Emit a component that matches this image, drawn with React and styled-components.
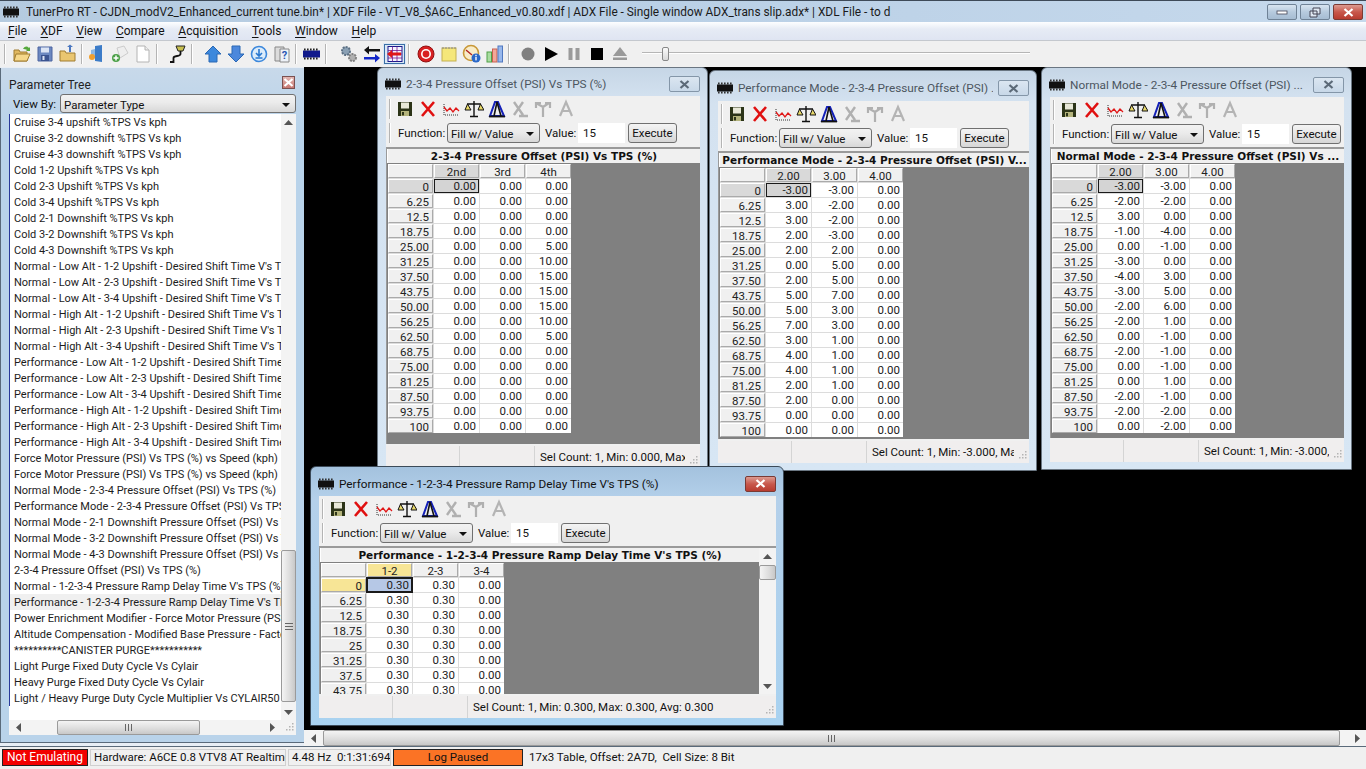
import React from 'react';
import styled, { createGlobalStyle } from 'styled-components';

const UI_FONT = 'Roboto, "Noto Sans", "Liberation Sans", sans-serif';

const GlobalStyle = createGlobalStyle`
  html, body {
    margin: 0;
    padding: 0;
    background: #000;
    overflow: hidden;
  }
  * {
    box-sizing: border-box;
  }
`;

const AppFrame = styled.div`
  width: 1366px;
  height: 769px;
  display: flex;
  flex-direction: column;
  font-family: ${UI_FONT};
  font-size: 11.5px;
  color: #111;
  overflow: hidden;
`;

const TitleBar = styled.div`
  height: 22px;
  flex: none;
  display: flex;
  align-items: center;
  padding: 1px 3px 0 2px;
  border-top: 1px solid #3e4a58;
  background: linear-gradient(90deg, #b5cbe0, #bad0e6 50%, #c6d9ec);
`;

const AppTitle = styled.div`
  flex: 1;
  margin-left: 6px;
  font-size: 11.85px;
  color: #1a1a1a;
  white-space: nowrap;
  overflow: hidden;
`;

const CaptionButton = styled.div`
  width: 30px;
  height: 16px;
  margin-left: 3px;
  display: flex;
  align-items: center;
  justify-content: center;
  border: 1px solid ${(p) => (p.$danger ? '#7a3a34' : '#6f8296')};
  border-radius: 2px;
  background: ${(p) =>
    p.$danger
      ? 'linear-gradient(#dc9a90, #c8584c 50%, #b83c30)'
      : 'linear-gradient(#d8e4f0, #b6cade 50%, #a6bcd2)'};
`;

const MenuBar = styled.div`
  height: 19px;
  flex: none;
  display: flex;
  align-items: center;
  padding-left: 8px;
  gap: 13.7px;
  background: linear-gradient(#fdfeff, #e6ebf5 40%, #dfe5f2);
  border-bottom: 1px solid #c4c8ce;
  font-size: 12px;
`;

const MenuItem = styled.span`
  color: #111;
  u {
    text-decoration-thickness: 1px;
    text-underline-offset: 2px;
  }
`;

const MainToolbar = styled.div`
  height: 26px;
  flex: none;
  display: flex;
  align-items: center;
  padding-left: 2px;
  background: #f0f0f0;
`;

const ToolSep = styled.div`
  width: 2px;
  height: 20px;
  flex: none;
  margin-left: 2px;
  margin-right: ${(p) => p.$after ?? 4}px;
  background: #b4b4b4;
  border-right: 1px solid #fff;
`;

const ToolIcon = styled.div`
  width: 23px;
  height: 22px;
  flex: none;
  display: flex;
  align-items: center;
  justify-content: center;
  ${(p) => p.$pressed && 'background: #dce8f5; outline: 1px solid #3a6ea5; outline-offset: -2px;'}
`;

const SliderTrack = styled.div`
  width: 388px;
  height: 14px;
  margin-left: 11px;
  display: flex;
  align-items: center;
  padding-left: 20px;
  background: linear-gradient(#f0f0f0 5px, #b6b6b6 5px, #b6b6b6 6px, #fff 6px, #fff 7px, #f0f0f0 7px);
`;

const SliderThumb = styled.div`
  width: 7px;
  height: 14px;
  border: 1px solid #888;
  border-radius: 2px;
  background: linear-gradient(#fafafa, #d8d8d8);
`;

const Workspace = styled.div`
  flex: 1;
  min-height: 0;
  display: flex;
  background: #e8eef5;
`;

const TreePanel = styled.div`
  width: 304px;
  flex: none;
  display: flex;
  flex-direction: column;
  margin: 1px 0 3px;
  padding: 0 8px 7px 8px;
  background: linear-gradient(#c8d9ea, #b9d3ea 60px);
  border-left: 1px solid #5a6a7a;
  border-bottom: 1px solid #5a6a7a;
`;

const TreeHeader = styled.div`
  height: 26px;
  flex: none;
  display: flex;
  align-items: flex-end;
  justify-content: space-between;
  padding: 0 0 2px 0;
  font-size: 12px;
  color: #222;
`;

const TreeClose = styled.div`
  width: 13px;
  height: 13px;
  margin: 0 1px 3px 0;
  display: flex;
  align-items: center;
  justify-content: center;
  border: 1px solid #7a5050;
  background: linear-gradient(#e2b6b2, #c87872);
`;

const ViewByRow = styled.div`
  height: 19px;
  flex: none;
  display: flex;
  align-items: center;
  gap: 5px;
  padding-left: 4px;
  font-size: 11.5px;
`;

const ViewByLabel = styled.span`
  width: 42px;
  flex: none;
  white-space: nowrap;
`;

const Combo = styled.div`
  height: ${(p) => p.$h ?? 20}px;
  width: ${(p) => (p.$w ? `${p.$w}px` : 'auto')};
  flex: ${(p) => (p.$w ? 'none' : '1')};
  display: flex;
  align-items: center;
  justify-content: space-between;
  padding: 2px 5px 0 3px;
  border: 1px solid #707070;
  border-radius: 3px;
  background: linear-gradient(#f2f2f2, #ebebeb 45%, #d8d8d8);
  font-size: 11.5px;
  white-space: nowrap;
`;

const ComboArrow = styled.span`
  width: 0;
  height: 0;
  border-left: 4px solid transparent;
  border-right: 4px solid transparent;
  border-top: 4px solid #111;
`;

const ListBody = styled.div`
  flex: 1;
  min-height: 0;
  display: flex;
  margin-top: 1px;
  background: #fff;
`;

const ListRows = styled.div`
  flex: 1;
  min-width: 0;
  overflow: hidden;
`;

const ListRow = styled.div`
  height: 16px;
  line-height: 18px;
  padding-left: 4px;
  font-size: 11px;
  white-space: nowrap;
  overflow: hidden;
  border-left: 1px solid #2a3a9a;
  color: #1c1c1c;
  background: ${(p) => (p.$selected ? '#f0f0f0' : '#fff')};
`;

const VScroll = styled.div`
  width: ${(p) => p.$w ?? 15}px;
  flex: none;
  display: flex;
  flex-direction: column;
  align-items: center;
  background: #f3f3f3;
`;

const ScrollEnd = styled.div`
  height: 16px;
  flex: none;
  display: flex;
  align-items: center;
  justify-content: center;
`;

const VTrack = styled.div`
  flex: 1;
  width: 100%;
  display: flex;
  flex-direction: column;
  padding-top: ${(p) => p.$top}px;
`;

const VThumb = styled.div`
  height: ${(p) => p.$h}px;
  flex: none;
  display: flex;
  align-items: center;
  justify-content: center;
  border: 1px solid #9a9a9a;
  border-radius: 2px;
  background: linear-gradient(90deg, #f4f4f4, #dcdcdc 60%, #c8c8c8);
`;

const GripBars = styled.span`
  width: 8px;
  height: 7px;
  border-top: 1px solid #666;
  border-bottom: 1px solid #666;
  background: linear-gradient(#666, #666) center / 100% 1px no-repeat;
`;

const HScroll = styled.div`
  height: ${(p) => p.$h ?? 15}px;
  flex: none;
  display: flex;
  align-items: center;
  background: #f3f3f3;
`;

const HEnd = styled.div`
  width: 18px;
  height: 100%;
  flex: none;
  display: flex;
  align-items: center;
  justify-content: center;
`;

const HTrack = styled.div`
  flex: 1;
  height: 100%;
  display: flex;
  padding-left: ${(p) => p.$left}px;
`;

const HThumb = styled.div`
  width: ${(p) => p.$w}px;
  height: 100%;
  display: flex;
  align-items: center;
  justify-content: center;
  border: 1px solid #9a9a9a;
  border-radius: 2px;
  background: linear-gradient(#f4f4f4, #dcdcdc 60%, #c8c8c8);
`;

const GripBarsH = styled.span`
  width: 7px;
  height: 7px;
  border-left: 1px solid #666;
  border-right: 1px solid #666;
  background: linear-gradient(#666, #666) center / 1px 100% no-repeat;
`;

const Corner = styled.div`
  width: 15px;
  height: 100%;
  flex: none;
  display: flex;
  align-items: flex-end;
  justify-content: flex-end;
  padding: 0 2px 2px 0;
`;

const MdiColumn = styled.div`
  flex: 1;
  min-width: 0;
  display: flex;
  flex-direction: column;
  background: #000;
`;

const MdiCanvas = styled.div`
  flex: 1;
  min-height: 0;
  position: relative;
  overflow: hidden;
  background: #000;
`;

const ChildWindow = styled.div`
  position: absolute;
  left: ${(p) => p.$x}px;
  top: ${(p) => p.$y}px;
  width: ${(p) => p.$w}px;
  height: ${(p) => p.$h}px;
  display: flex;
  flex-direction: column;
  padding: 0 7px 7px 8px;
  border: 1px solid ${(p) => (p.$active ? '#3c4a58' : '#6a7682')};
  border-radius: 6px 6px 0 0;
  background: ${(p) =>
    p.$active
      ? 'linear-gradient(#a4c2de, #b4d0ea 32px, #a9d2f0)'
      : 'linear-gradient(#c6d6e6, #d4e2f0 32px, #d7e6f4)'};
`;

const ChildTitle = styled.div`
  height: ${(p) => p.$h}px;
  flex: none;
  display: flex;
  align-items: center;
  padding-top: 4px;
  margin-left: -1px;
  gap: 5px;
`;

const ChildTitleText = styled.div`
  flex: 1;
  min-width: 0;
  font-size: 11.8px;
  color: ${(p) => (p.$active ? '#111' : '#4c5660')};
  white-space: nowrap;
  overflow: hidden;
`;

const ChildClose = styled.div`
  width: 31px;
  height: 16px;
  flex: none;
  display: flex;
  align-items: center;
  justify-content: center;
  border: 1px solid ${(p) => (p.$active ? '#7a3a34' : '#8496a8')};
  border-radius: 2px;
  background: ${(p) =>
    p.$active
      ? 'linear-gradient(#dc9a90, #c8584c 50%, #b83c30)'
      : 'linear-gradient(#dbe6f1, #c8d8e8)'};
`;

const ChildBody = styled.div`
  flex: 1;
  min-height: 0;
  display: flex;
  flex-direction: column;
  background: #f0f0f0;
`;

const ToolRow = styled.div`
  height: ${(p) => p.$h ?? 24}px;
  flex: none;
  display: flex;
  align-items: center;
  padding-left: 3px;
`;

const RowGrip = styled.div`
  width: 2px;
  height: 20px;
  flex: none;
  margin-right: ${(p) => p.$after}px;
  background: #b4b4b4;
  border-right: 1px solid #fff;
`;

const FieldLabel = styled.span`
  width: ${(p) => p.$w}px;
  margin-left: ${(p) => p.$before ?? 0}px;
  flex: none;
  font-size: 11.5px;
  white-space: nowrap;
`;

const ValueInput = styled.div`
  width: 47px;
  height: 20px;
  flex: none;
  display: flex;
  align-items: center;
  padding-left: 5px;
  background: #fff;
  font-size: 11.5px;
`;

const ExecuteButton = styled.div`
  width: 49px;
  height: 20px;
  flex: none;
  margin-left: 3px;
  display: flex;
  align-items: center;
  justify-content: center;
  border: 1px solid #707070;
  border-radius: 3px;
  background: linear-gradient(#f4f4f4, #e6e6e6 50%, #d6d6d6);
  font-size: 11.5px;
`;

const GridFrame = styled.div`
  flex: 1;
  min-height: 0;
  display: flex;
  margin-top: ${(p) => p.$top}px;
  border-top: 2px solid #9a9a9a;
  border-left: 1px solid #9a9a9a;
  background: #808080;
`;

const GridMain = styled.div`
  flex: 1;
  min-width: 0;
  display: flex;
  flex-direction: column;
  overflow: hidden;
`;

const GridCaption = styled.div`
  height: 14px;
  flex: none;
  margin-bottom: 1px;
  padding: 0 2px;
  line-height: 14px;
  text-align: center;
  border-left: 1px solid #fff;
  background: #f0f0f0;
  font-family: "DejaVu Sans", "Liberation Sans", sans-serif;
  font-size: 10.5px;
  font-weight: 700;
  color: #111;
  white-space: nowrap;
  overflow: hidden;
`;

const Table = styled.div`
  display: grid;
  grid-template-columns: repeat(4, 45px);
  grid-auto-rows: 14px;
  gap: 1px;
  width: max-content;
  margin-left: 1px;
  background: #dcdcdc;
`;

const HeadCell = styled.div`
  line-height: 14px;
  text-align: ${(p) => (p.$right ? 'right' : 'center')};
  padding-right: ${(p) => (p.$right ? 3 : 0)}px;
  overflow: hidden;
  font-size: 11.5px;
  color: #222;
  border: 1px solid #fff;
  border-right-color: #aaa;
  border-bottom-color: #aaa;
  background: ${(p) =>
    p.$hot === 'yellow' ? '#f7e596' : p.$hot === 'grey' ? '#d9d9d9' : '#f0f0f0'};
`;

const ValueCell = styled.div`
  line-height: 14px;
  text-align: right;
  padding-right: 3px;
  overflow: hidden;
  font-size: 11.5px;
  color: #222;
  background: ${(p) =>
    p.$sel === 'blue' ? '#b6c8e6' : p.$sel === 'grey' ? '#d4d4d4' : '#fff'};
  ${(p) => p.$sel && `outline: ${p.$sel === 'blue' ? 2 : 1}px solid #1a1a1a; outline-offset: -1px;`}
`;

const ChildStatus = styled.div`
  height: 22px;
  flex: none;
  display: flex;
  margin-top: 2px;
  background: #f0eeee;
  font-size: 11.5px;
`;

const StatusPane = styled.div`
  width: ${(p) => (p.$w ? `${p.$w}px` : 'auto')};
  flex: ${(p) => (p.$w ? 'none' : '1')};
  min-width: 0;
  padding-left: 5px;
  line-height: 23px;
  white-space: nowrap;
  overflow: hidden;
  border-right: ${(p) => (p.$w ? '1px solid #d4d4d4' : 'none')};
`;

const StatusBar = styled.div`
  height: 23px;
  flex: none;
  display: flex;
  align-items: stretch;
  gap: 2px;
  padding: 2px 0 3px 2px;
  border-top: 1px solid #5a6a7a;
  background: #f0f0f0;
  font-size: 11.5px;
`;

const StatusCell = styled.div`
  width: ${(p) => p.$w}px;
  flex: none;
  display: flex;
  align-items: center;
  justify-content: ${(p) => (p.$center ? 'center' : 'flex-start')};
  padding-left: ${(p) => (p.$center ? 0 : 3)}px;
  padding-bottom: 1px;
  white-space: nowrap;
  overflow: hidden;
  font-size: ${(p) => p.$size ?? 11.5}px;
  color: ${(p) => p.$color ?? '#111'};
  background: ${(p) => p.$bg ?? 'transparent'};
  border: 1px solid ${(p) => (p.$bg ? '#222' : p.$plain ? 'transparent' : '#d0d0d0')};
`;

const ChipSvg = styled.svg`
  flex: none;
`;

const ChipIcon = ({ w = 16 }) => (
  <ChipSvg width={w} height="12" viewBox="0 0 16 12">
    <rect x="0" y="2.5" width="16" height="7" fill="#111" />
    {[1, 4, 7, 10, 13].map((x) => (
      <g key={x}>
        <rect x={x} y="0.5" width="1.6" height="2" fill="#333" />
        <rect x={x} y="9.5" width="1.6" height="2" fill="#333" />
      </g>
    ))}
  </ChipSvg>
);

const CloseGlyph = ({ color = '#fff' }) => (
  <svg width="11" height="9" viewBox="0 0 11 9">
    <path d="M1.5 1 L9.5 8 M9.5 1 L1.5 8" stroke={color} strokeWidth="2.2" />
  </svg>
);

const Svg = ({ children }) => (
  <svg width="20" height="20" viewBox="0 0 20 20">
    {children}
  </svg>
);

const icons = {
  open: (
    <Svg>
      <path d="M2 6h5l1 2h7v9H2z" fill="#e0b860" stroke="#a07c30" />
      <path d="M4 10h14l-3 7H2z" fill="#f6d88a" stroke="#a07c30" />
      <path d="M11 5c2-3 4-3 6-1l1-1v4h-4l1-1c-1-1-3-1-4-1z" fill="#56a83c" />
    </Svg>
  ),
  save: (
    <Svg>
      <path d="M3 3h14v14H3z" fill="#6c88c0" stroke="#4c64a0" />
      <rect x="6" y="3.5" width="8" height="5" fill="#dbe4f4" />
      <rect x="6" y="11" width="8" height="6" fill="#3c5490" />
      <rect x="7.5" y="12" width="2" height="4" fill="#dbe4f4" />
    </Svg>
  ),
  folderUp: (
    <Svg>
      <path d="M2 7h5l1 2h9v8H2z" fill="#eac670" stroke="#a07c30" />
      <path d="M11 8V3h-2l3-2.5L15 3h-2v5z" fill="#4c78c0" />
    </Svg>
  ),
  blueDoc: (
    <Svg>
      <path d="M8 2l7-1v17l-7-1z" fill="#3c7cc8" />
      <path d="M4 6l4-1v9l-4-1z" fill="#8cb8e4" />
      <circle cx="5" cy="13" r="3" fill="#f0a030" />
    </Svg>
  ),
  plusDoc: (
    <Svg>
      <path d="M7 4l7-2 4 7-8 5z" fill="#eee" stroke="#ccc" />
      <circle cx="6" cy="14" r="4" fill="#4ca048" />
      <path d="M6 11.5v5M3.5 14h5" stroke="#fff" strokeWidth="1.5" />
    </Svg>
  ),
  blank: (
    <Svg>
      <path d="M4 2h8l4 4v12H4z" fill="#fff" stroke="#b4b4b4" />
      <path d="M12 2v4h4" fill="#eee" stroke="#b4b4b4" />
    </Svg>
  ),
  probe: (
    <Svg>
      <path d="M8 2h9l-2 5h-5z" fill="#c8c050" stroke="#222" />
      <path d="M12.5 7v3c0 3-7 1-7 4v4H2" fill="none" stroke="#111" strokeWidth="1.8" />
    </Svg>
  ),
  up: (
    <Svg>
      <path d="M10 2l8 8h-4v8H6v-8H2z" fill="#3c88dc" stroke="#2a68b4" />
    </Svg>
  ),
  down: (
    <Svg>
      <path d="M10 18l8-8h-4V2H6v8H2z" fill="#4c88dc" stroke="#2a68b4" />
    </Svg>
  ),
  dl: (
    <Svg>
      <circle cx="10" cy="10" r="7.5" fill="#dcecfa" stroke="#3c88dc" strokeWidth="1.6" />
      <path d="M10 5v6M7 9l3 3 3-3M6.5 14h7" fill="none" stroke="#2a78d0" strokeWidth="1.6" />
    </Svg>
  ),
  help: (
    <Svg>
      <path d="M3 3h9v14H3z" fill="#dcdcdc" stroke="#888" />
      <path d="M8 5h9v13H8z" fill="#eef2f8" stroke="#888" />
      <text x="12.5" y="15" fontSize="11" fontWeight="700" textAnchor="middle" fill="#2a58b4">?</text>
    </Svg>
  ),
  chipBlue: (
    <svg width="18" height="12" viewBox="0 0 18 12">
      <rect x="0" y="2.5" width="17" height="7" fill="#111a8c" />
      {[1, 4, 7, 10, 13].map((x) => (
        <g key={x}>
          <rect x={x} y="0.5" width="1.6" height="2" fill="#222" />
          <rect x={x} y="9.5" width="1.6" height="2" fill="#222" />
        </g>
      ))}
    </svg>
  ),
  gears: (
    <Svg>
      <circle cx="7" cy="7" r="4" fill="#8aa0b4" stroke="#5c7084" strokeWidth="2" strokeDasharray="2 1" />
      <circle cx="13.5" cy="13.5" r="3.5" fill="#b0b0b0" stroke="#808080" strokeWidth="2" strokeDasharray="2 1" />
    </Svg>
  ),
  swap: (
    <Svg>
      <path d="M2 6l5-4v3h11v2.5H7v3z" fill="#111" />
      <path d="M18 14l-5-4v3H2v2.5h11v3z" fill="#1226c8" />
    </Svg>
  ),
  gridRed: (
    <Svg>
      <rect x="3" y="2.5" width="14" height="15" fill="#f4f4ff" stroke="#1a1a8c" />
      <path d="M3 6.5h14M3 10h14M3 14h14M7.5 2.5v15M12 2.5v15" stroke="#7a1a8c" strokeWidth="0.8" />
      <path d="M2 10l5-4v2.5h9v3H7V14z" fill="#e01818" />
    </Svg>
  ),
  target: (
    <Svg>
      <circle cx="10" cy="10" r="8" fill="#d82020" stroke="#901010" />
      <circle cx="10" cy="10" r="5" fill="#fff" />
      <circle cx="10" cy="10" r="3.4" fill="#d82020" />
    </Svg>
  ),
  note: (
    <Svg>
      <rect x="3" y="4" width="14" height="13" fill="#f5e77a" stroke="#c4b050" />
      <path d="M4 3v2M7 3v2M10 3v2M13 3v2M16 3v2" stroke="#888" />
    </Svg>
  ),
  gauge: (
    <Svg>
      <circle cx="9" cy="9" r="7.5" fill="#f8ecc8" stroke="#c89838" strokeWidth="1.6" />
      <path d="M4 6l6 5" stroke="#b02020" strokeWidth="1.4" />
      <circle cx="14" cy="14" r="4.5" fill="#2a68c8" />
      <rect x="13.3" y="12.8" width="1.4" height="3.6" fill="#fff" />
      <rect x="13.3" y="10.8" width="1.4" height="1.3" fill="#fff" />
    </Svg>
  ),
  bars: (
    <Svg>
      <rect x="2" y="8" width="4.5" height="10" fill="#a8dca0" stroke="#50a048" />
      <rect x="7.5" y="5" width="4.5" height="13" fill="#f4a898" stroke="#c86050" />
      <rect x="13" y="2" width="4.5" height="16" fill="#98b8ec" stroke="#5078c0" />
    </Svg>
  ),
  rec: (
    <Svg>
      <circle cx="10" cy="10" r="6.5" fill="#808080" />
    </Svg>
  ),
  play: (
    <Svg>
      <path d="M4 3l13 7-13 7z" fill="#000" />
    </Svg>
  ),
  pause: (
    <Svg>
      <path d="M4.5 4h4v12h-4zM11.5 4h4v12h-4z" fill="#9a9a9a" />
    </Svg>
  ),
  stop: (
    <Svg>
      <rect x="4" y="4" width="12" height="12" fill="#000" />
    </Svg>
  ),
  eject: (
    <Svg>
      <path d="M10 3l7 9H3z" fill="#9a9a9a" />
      <rect x="3" y="13.5" width="14" height="2.5" fill="#9a9a9a" />
    </Svg>
  ),
  childSave: (
    <Svg>
      <path d="M3 3h14v14H3z" fill="#2c3418" />
      <rect x="6" y="3.5" width="8" height="6" fill="#e8e8d8" />
      <rect x="6" y="12" width="8" height="5" fill="#b4b47c" />
      <rect x="7" y="13" width="2" height="3.4" fill="#2c3418" />
    </Svg>
  ),
  childX: (
    <Svg>
      <path d="M4 3l12 14M16 3L4 17" stroke="#e01010" strokeWidth="2.6" />
    </Svg>
  ),
  childChart: (
    <Svg>
      <path d="M3 5v11h15" fill="none" stroke="#333" strokeDasharray="1 1" />
      <path d="M3 8l3 4 3-3 3 4 3-4 3 3" fill="none" stroke="#e01818" strokeWidth="1.3" />
    </Svg>
  ),
  scales: (
    <Svg>
      <path d="M10 2v15M6 17.5h8M3 5h14" stroke="#111" strokeWidth="1.4" />
      <path d="M3.5 5L1 11h6zM16.5 5L14 11h6z" fill="#e8d868" stroke="#111" />
    </Svg>
  ),
  delta: (
    <Svg>
      <path d="M3 17h14L11 3H8z" fill="none" stroke="#1420b8" strokeWidth="2" />
      <path d="M7 17l3-14 4 14" fill="none" stroke="#111" strokeWidth="1.6" />
      <path d="M2 17.5h16" stroke="#111" strokeWidth="1.8" />
    </Svg>
  ),
  greyX: (
    <Svg>
      <path d="M4 3l9 13M13 3L4 16M9 17h9" stroke="#b0b0b0" strokeWidth="2.4" />
    </Svg>
  ),
  greyY: (
    <Svg>
      <path d="M10 18V8M10 8L3 4M10 8l6-4M3 9V4h5M17 9V4h-5" fill="none" stroke="#b0b0b0" strokeWidth="2.2" />
    </Svg>
  ),
  greyA: (
    <Svg>
      <path d="M4 17l6-14 6 14M6.5 12h7" fill="none" stroke="#b4b4b4" strokeWidth="2.2" />
    </Svg>
  ),
};

const ArrowUp = () => (
  <svg width="9" height="5" viewBox="0 0 9 5"><path d="M4.5 0L9 5H0z" fill="#555" /></svg>
);
const ArrowDown = () => (
  <svg width="9" height="5" viewBox="0 0 9 5"><path d="M4.5 5L9 0H0z" fill="#555" /></svg>
);
const ArrowLeft = () => (
  <svg width="5" height="9" viewBox="0 0 5 9"><path d="M0 4.5L5 0v9z" fill="#555" /></svg>
);
const ArrowRight = () => (
  <svg width="5" height="9" viewBox="0 0 5 9"><path d="M5 4.5L0 0v9z" fill="#555" /></svg>
);
const ResizeDots = () => (
  <svg width="11" height="11" viewBox="0 0 11 11">
    <path d="M9 1h1.5v1.5H9zM6 4h1.5v1.5H6zM9 4h1.5v1.5H9zM3 7h1.5v1.5H3zM6 7h1.5v1.5H6zM9 7h1.5v1.5H9z" fill="#b4b4b4" />
  </svg>
);

const mainTools = [
  ['sep', 4], 'open', 'save', 'folderUp',
  ['sep', 2], 'blueDoc', 'plusDoc', 'blank',
  ['sep', 8], 'probe',
  ['sep', 8], 'up', 'down', 'dl', 'help',
  ['sep', 3], 'chipBlue',
  ['sep', 10], 'gears', 'swap', 'gridRed',
  ['sep', 4], 'target', 'note', 'gauge', 'bars',
  ['sep', 6], 'rec', 'play', 'pause', 'stop', 'eject',
];

const childTools = ['childSave', 'childX', 'childChart', 'scales', 'delta', 'greyX', 'greyY', 'greyA'];

const menus = [
  ['F', 'ile'], ['X', 'DF'], ['V', 'iew'], ['C', 'ompare'],
  ['A', 'cquisition'], ['T', 'ools'], ['W', 'indow'], ['H', 'elp'],
];

const treeItems = [
  'Cruise 3-4 upshift %TPS Vs kph',
  'Cruise 3-2 downshift %TPS Vs kph',
  'Cruise 4-3 downshift %TPS Vs kph',
  'Cold 1-2 Upshift %TPS Vs kph',
  'Cold 2-3 Upshift %TPS Vs kph',
  'Cold 3-4 Upshift %TPS Vs kph',
  'Cold 2-1 Downshift %TPS Vs kph',
  'Cold 3-2 Downshift %TPS Vs kph',
  'Cold 4-3 Downshift %TPS Vs kph',
  "Normal - Low Alt - 1-2 Upshift - Desired Shift Time V's TPS",
  "Normal - Low Alt - 2-3 Upshift - Desired Shift Time V's TPS",
  "Normal - Low Alt - 3-4 Upshift - Desired Shift Time V's TPS",
  "Normal - High Alt - 1-2 Upshift - Desired Shift Time V's TPS",
  "Normal - High Alt - 2-3 Upshift - Desired Shift Time V's TPS",
  "Normal - High Alt - 3-4 Upshift - Desired Shift Time V's TPS",
  "Performance - Low Alt - 1-2 Upshift - Desired Shift Time V's TPS",
  "Performance - Low Alt - 2-3 Upshift - Desired Shift Time V's TPS",
  "Performance - Low Alt - 3-4 Upshift - Desired Shift Time V's TPS",
  "Performance - High Alt - 1-2 Upshift - Desired Shift Time V's TPS",
  "Performance - High Alt - 2-3 Upshift - Desired Shift Time V's TPS",
  "Performance - High Alt - 3-4 Upshift - Desired Shift Time V's TPS",
  'Force Motor Pressure (PSI) Vs TPS (%) vs Speed (kph)',
  'Force Motor Pressure (PSI) Vs TPS (%) vs Speed (kph)',
  'Normal Mode - 2-3-4 Pressure Offset (PSI) Vs TPS (%)',
  'Performance Mode - 2-3-4 Pressure Offset (PSI) Vs TPS (%)',
  'Normal Mode - 2-1 Downshift Pressure Offset (PSI) Vs TPS',
  'Normal Mode - 3-2 Downshift Pressure Offset (PSI) Vs TPS',
  'Normal Mode - 4-3 Downshift Pressure Offset (PSI) Vs TPS',
  '2-3-4 Pressure Offset (PSI) Vs TPS (%)',
  "Normal - 1-2-3-4 Pressure Ramp Delay Time V's TPS (%)",
  "Performance - 1-2-3-4 Pressure Ramp Delay Time V's TPS (%)",
  'Power Enrichment Modifier - Force Motor Pressure (PSI)',
  'Altitude Compensation - Modified Base Pressure - Factor',
  '**********CANISTER PURGE***********',
  'Light Purge Fixed Duty Cycle Vs Cylair',
  'Heavy Purge Fixed Duty Cycle Vs Cylair',
  'Light / Heavy Purge Duty Cycle Multiplier Vs CYLAIR50',
];

const tpsRows = ['0', '6.25', '12.5', '18.75', '25.00', '31.25', '37.50', '43.75', '50.00', '56.25', '62.50', '68.75', '75.00', '81.25', '87.50', '93.75', '100'];

const fmt = (v) => v.toFixed(2);

const windows = [
  {
    title: '2-3-4 Pressure Offset (PSI) Vs TPS (%)',
    caption: '2-3-4 Pressure Offset (PSI) Vs TPS (%)',
    x: 73, y: 0, w: 331, h: 409, titleH: 28, gridTop: 2,
    cols: ['2nd', '3rd', '4th'],
    rows: tpsRows,
    data: [0, 0, 0, 0, 5, 10, 15, 15, 15, 10, 5, 0, 0, 0, 0, 0, 0].map((v) => [0, 0, v]),
    stat: 'Sel Count: 1, Min: 0.000, Max: 0.000, Avg: 0.000',
  },
  {
    title: 'Performance Mode - 2-3-4 Pressure Offset (PSI) ...',
    caption: 'Performance Mode - 2-3-4 Pressure Offset (PSI) V...',
    x: 405, y: 3, w: 328, h: 401, titleH: 30, gridTop: 1,
    cols: ['2.00', '3.00', '4.00'],
    rows: tpsRows,
    data: [[-3, -3], [3, -2], [3, -2], [2, -3], [2, 2], [0, 5], [2, 5], [5, 7], [5, 3], [7, 3], [3, 1], [4, 1], [4, 1], [2, 1], [2, 0], [0, 0], [0, 0]].map((r) => [...r, 0]),
    stat: 'Sel Count: 1, Min: -3.000, Max: 7.000, Avg: 1.000',
  },
  {
    title: 'Normal Mode - 2-3-4 Pressure Offset (PSI) ...',
    caption: 'Normal Mode - 2-3-4 Pressure Offset (PSI) Vs ...',
    x: 737, y: 0, w: 311, h: 403, titleH: 29, gridTop: 1,
    cols: ['2.00', '3.00', '4.00'],
    rows: tpsRows,
    data: [[-3, -3], [-2, -2], [3, 0], [-1, -4], [0, -1], [-3, 0], [-4, 3], [-3, 5], [-2, 6], [-2, 1], [0, -1], [-2, -1], [0, -1], [0, 1], [-2, -1], [-2, -2], [0, -2]].map((r) => [...r, 0]),
    stat: 'Sel Count: 1, Min: -3.000, Max: 6.000, Avg: 1.000',
  },
  {
    title: "Performance - 1-2-3-4 Pressure Ramp Delay Time V's TPS (%)",
    caption: "Performance - 1-2-3-4 Pressure Ramp Delay Time V's TPS (%)",
    x: 6, y: 399, w: 474, h: 260, titleH: 29, gridTop: 1, active: true,
    cols: ['1-2', '2-3', '3-4'],
    rows: ['0', '6.25', '12.5', '18.75', '25', '31.25', '37.5', '43.75'],
    data: Array.from({ length: 8 }, () => [0.3, 0.3, 0]),
    stat: 'Sel Count: 1, Min: 0.300, Max: 0.300, Avg: 0.300',
  },
];

const GridTable = ({ win }) => (
  <Table>
    <HeadCell />
    {win.cols.map((c, i) => (
      <HeadCell key={c} $hot={i === 0 ? (win.active ? 'yellow' : 'grey') : undefined}>{c}</HeadCell>
    ))}
    {win.rows.map((r, ri) => (
      <React.Fragment key={r}>
        <HeadCell $right $hot={ri === 0 ? (win.active ? 'yellow' : 'grey') : undefined}>{r}</HeadCell>
        {win.data[ri].map((v, ci) => (
          <ValueCell key={ci} $sel={ri === 0 && ci === 0 ? (win.active ? 'blue' : 'grey') : undefined}>
            {fmt(v)}
          </ValueCell>
        ))}
      </React.Fragment>
    ))}
  </Table>
);

const TableWindow = ({ win }) => (
  <ChildWindow $x={win.x} $y={win.y} $w={win.w} $h={win.h} $active={win.active}>
    <ChildTitle $h={win.titleH}>
      <ChipIcon />
      <ChildTitleText $active={win.active}>{win.title}</ChildTitleText>
      <ChildClose $active={win.active}>
        <CloseGlyph color={win.active ? '#fff' : '#5c6a78'} />
      </ChildClose>
    </ChildTitle>
    <ChildBody>
      <ToolRow $h={25}>
        <RowGrip $after={2} />
        {childTools.map((t) => (
          <ToolIcon key={t}>{icons[t]}</ToolIcon>
        ))}
      </ToolRow>
      <ToolRow>
        <RowGrip $after={7} />
        <FieldLabel $w={49}>Function:</FieldLabel>
        <Combo $w={93}>
          Fill w/ Value
          <ComboArrow />
        </Combo>
        <FieldLabel $w={33} $before={5}>Value:</FieldLabel>
        <ValueInput>15</ValueInput>
        <ExecuteButton>Execute</ExecuteButton>
      </ToolRow>
      <GridFrame $top={win.gridTop}>
        <GridMain>
          <GridCaption>{win.caption}</GridCaption>
          <GridTable win={win} />
        </GridMain>
        {win.active && (
          <VScroll $w={17}>
            <ScrollEnd><ArrowUp /></ScrollEnd>
            <VTrack $top={1}>
              <VThumb $h={15} />
            </VTrack>
            <ScrollEnd><ArrowDown /></ScrollEnd>
          </VScroll>
        )}
      </GridFrame>
      <ChildStatus>
        <StatusPane $w={74} />
        <StatusPane $w={75} />
        <StatusPane>{win.stat}</StatusPane>
        <Corner><ResizeDots /></Corner>
      </ChildStatus>
    </ChildBody>
  </ChildWindow>
);

const App = () => (
  <AppFrame>
    <GlobalStyle />
    <TitleBar>
      <ChipIcon w={18} />
      <AppTitle>
        TunerPro RT - CJDN_modV2_Enhanced_current tune.bin* | XDF File - VT_V8_$A6C_Enhanced_v0.80.xdf | ADX File - Single window ADX_trans slip.adx* | XDL File - to d
      </AppTitle>
      <CaptionButton>
        <svg width="12" height="6" viewBox="0 0 12 6"><rect x="1" y="2" width="10" height="3" fill="#fff" stroke="#445" strokeWidth="0.8" /></svg>
      </CaptionButton>
      <CaptionButton>
        <svg width="12" height="11" viewBox="0 0 12 11"><path d="M4 1h7v6H4zM1 4h7v6H1z" fill="#dfe8f2" stroke="#445" /></svg>
      </CaptionButton>
      <CaptionButton $danger>
        <CloseGlyph />
      </CaptionButton>
    </TitleBar>
    <MenuBar>
      {menus.map(([key, rest]) => (
        <MenuItem key={key}><u>{key}</u>{rest}</MenuItem>
      ))}
    </MenuBar>
    <MainToolbar>
      {mainTools.map((t, i) =>
        Array.isArray(t) ? (
          <ToolSep key={i} $after={t[1]} />
        ) : (
          <ToolIcon key={t} $pressed={t === 'gridRed'}>{icons[t]}</ToolIcon>
        )
      )}
      <SliderTrack>
        <SliderThumb />
      </SliderTrack>
    </MainToolbar>
    <Workspace>
      <TreePanel>
        <TreeHeader>
          Parameter Tree
          <TreeClose><CloseGlyph color="#fff" /></TreeClose>
        </TreeHeader>
        <ViewByRow>
          <ViewByLabel>View By:</ViewByLabel>
          <Combo $h={19}>
            Parameter Type
            <ComboArrow />
          </Combo>
        </ViewByRow>
        <ListBody>
          <ListRows>
            {treeItems.map((item, i) => (
              <ListRow key={i} $selected={i === 30}>{item}</ListRow>
            ))}
          </ListRows>
          <VScroll>
            <ScrollEnd><ArrowUp /></ScrollEnd>
            <VTrack $top={420}>
              <VThumb $h={152}><GripBars /></VThumb>
            </VTrack>
            <ScrollEnd><ArrowDown /></ScrollEnd>
          </VScroll>
        </ListBody>
        <HScroll>
          <HEnd><ArrowLeft /></HEnd>
          <HTrack $left={30}>
            <HThumb $w={143}><GripBarsH /></HThumb>
          </HTrack>
          <HEnd><ArrowRight /></HEnd>
          <Corner><ResizeDots /></Corner>
        </HScroll>
      </TreePanel>
      <MdiColumn>
        <MdiCanvas>
          {windows.map((win) => (
            <TableWindow key={win.title} win={win} />
          ))}
        </MdiCanvas>
        <HScroll $h={16}>
          <HEnd><ArrowLeft /></HEnd>
          <HTrack $left={1}>
            <HThumb $w={1017}><GripBarsH /></HThumb>
          </HTrack>
          <HEnd><ArrowRight /></HEnd>
        </HScroll>
      </MdiColumn>
    </Workspace>
    <StatusBar>
      <StatusCell $w={86} $bg="#f20000" $color="#fff" $size={12} $center>Not Emulating</StatusCell>
      <StatusCell $w={196}>Hardware: A6CE 0.8 VTV8 AT Realtime</StatusCell>
      <StatusCell $w={103}>4.48 Hz&nbsp;&nbsp;0:1:31:694</StatusCell>
      <StatusCell $w={130} $bg="#fb7325" $center>Log Paused</StatusCell>
      <StatusCell $w={300} $plain>17x3 Table, Offset: 2A7D,&nbsp;&nbsp;Cell Size: 8 Bit</StatusCell>
    </StatusBar>
  </AppFrame>
);

export default App;
